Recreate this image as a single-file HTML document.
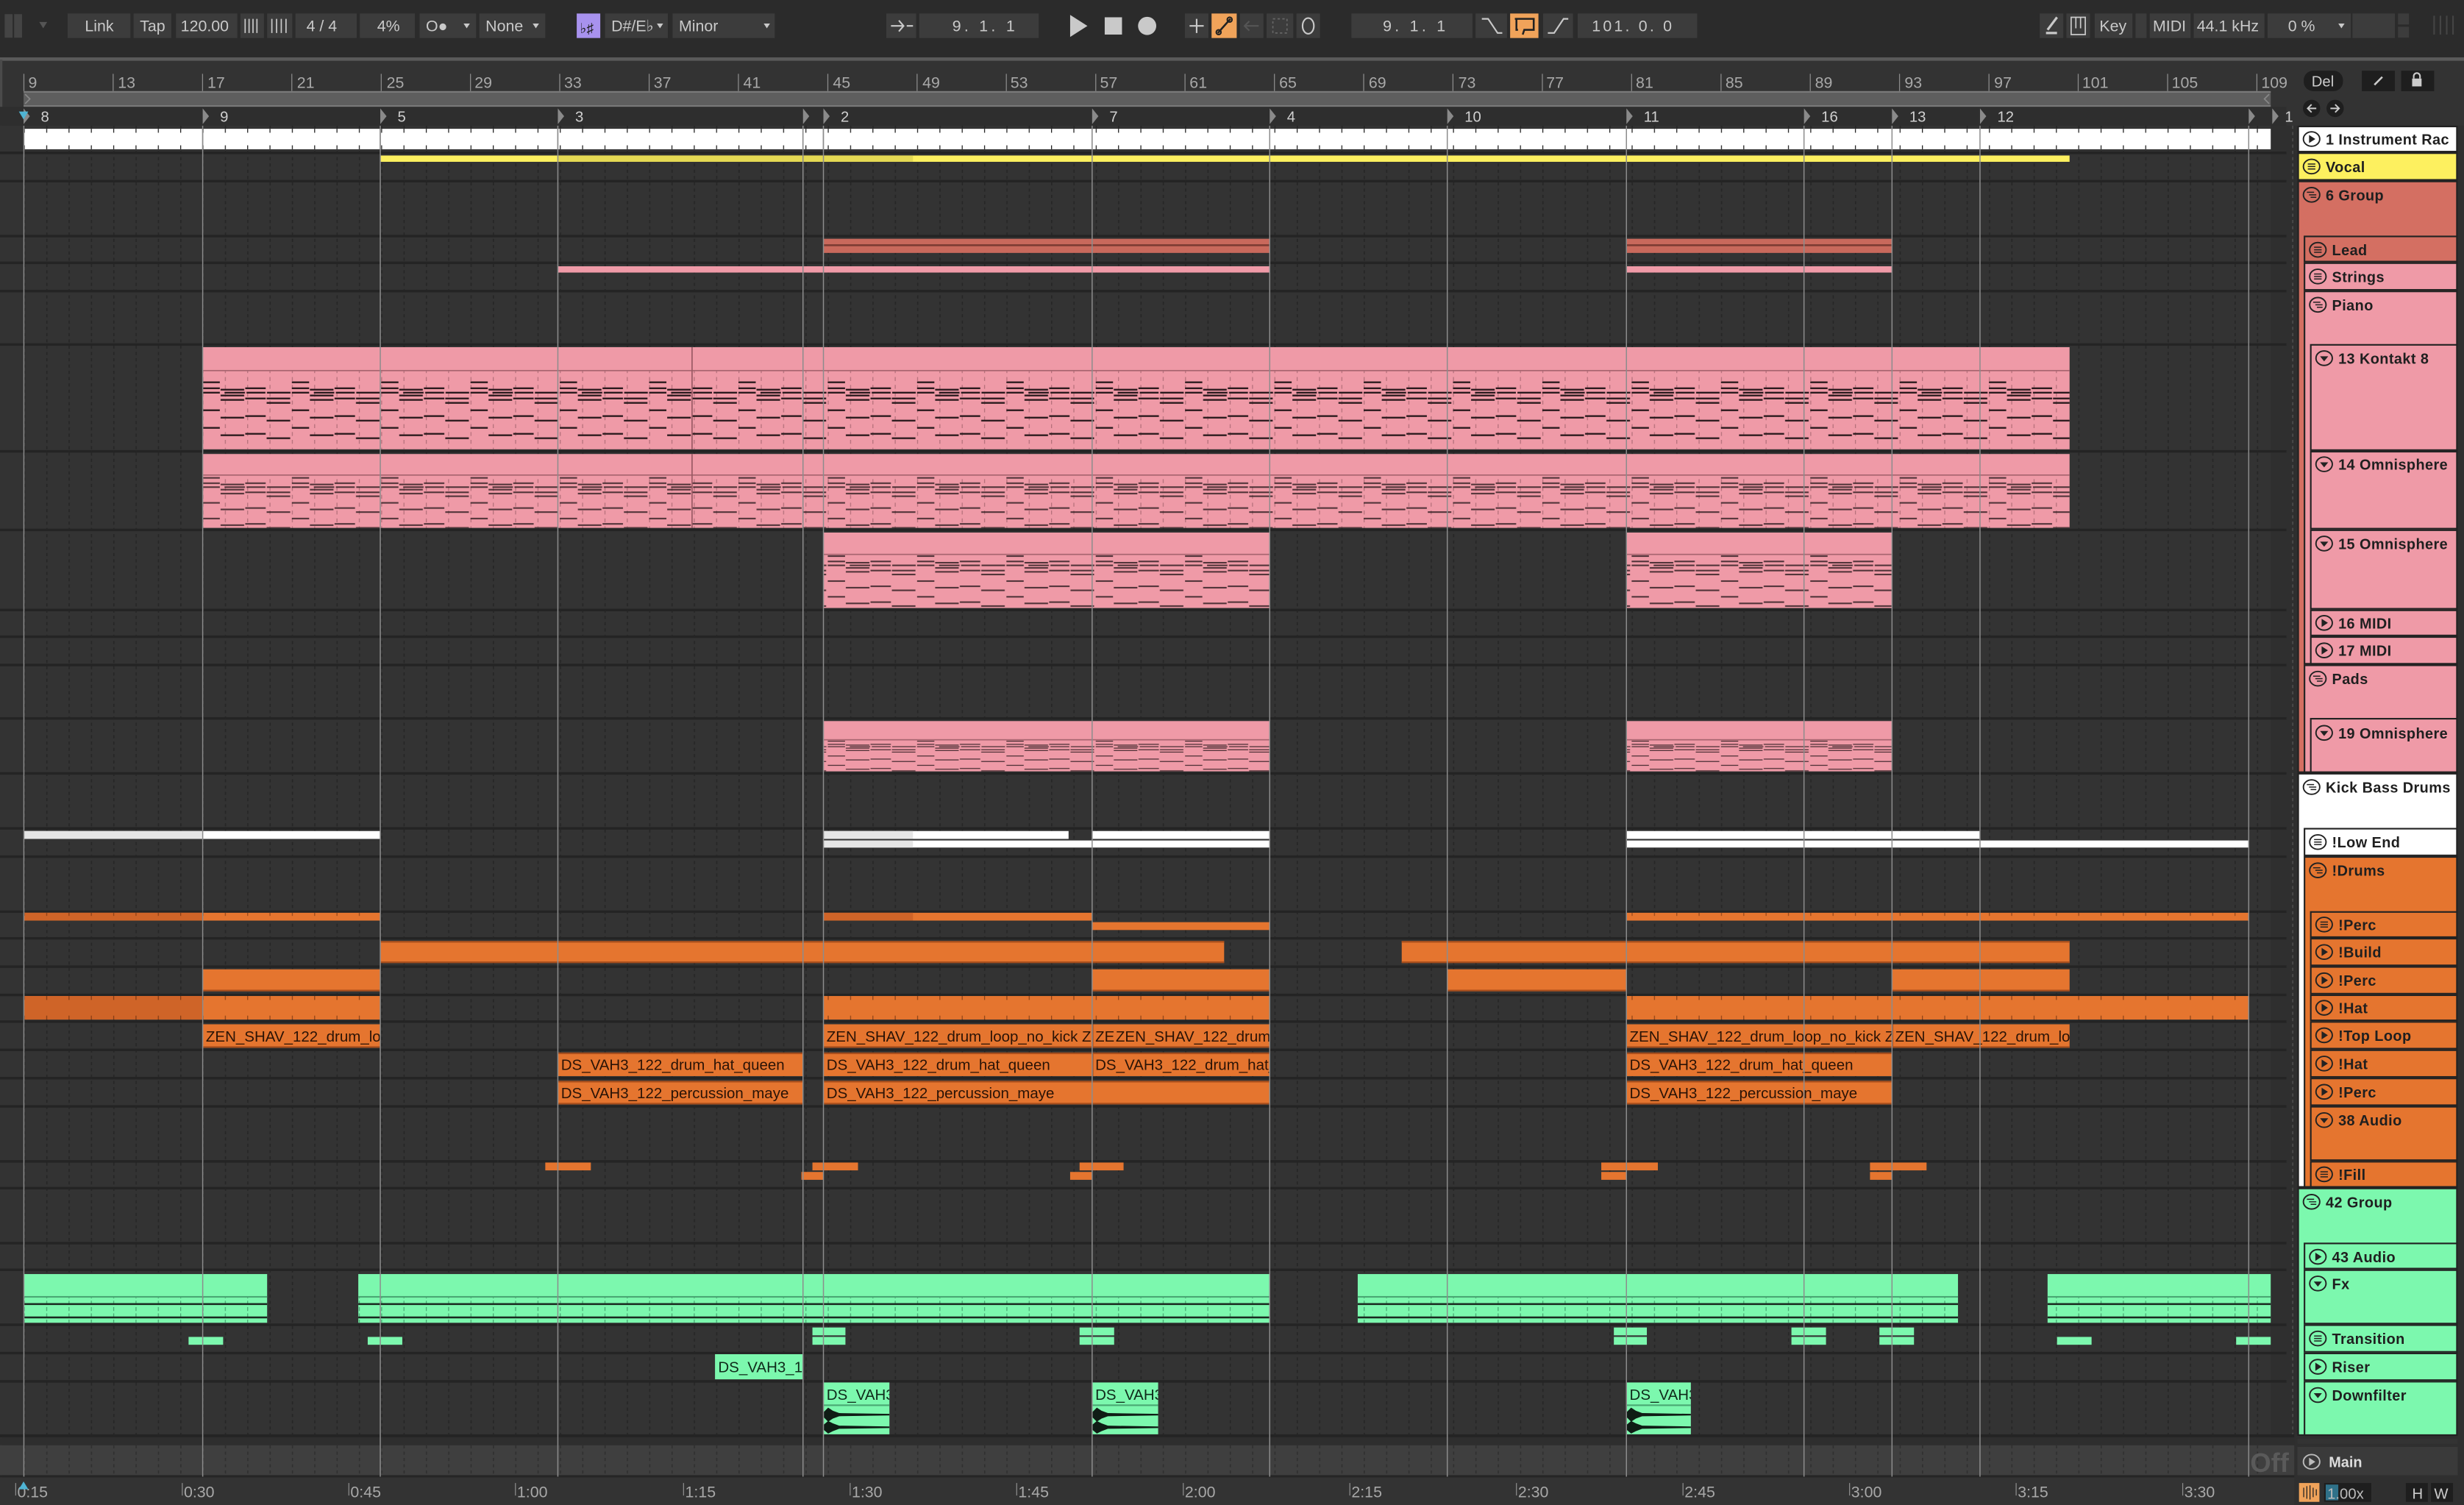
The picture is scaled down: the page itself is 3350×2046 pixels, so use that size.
<!DOCTYPE html>
<html><head><meta charset="utf-8"><style>
html,body{margin:0;padding:0;background:#2b2b2b;width:3350px;height:2046px;overflow:hidden}
svg{display:block}
text{font-family:"Liberation Sans",sans-serif}
.tb{font-size:10px;fill:#c9c9c9}
.hd{font-size:9.3px;font-weight:bold;fill:#1f1f1f;letter-spacing:0.2px}
.rl{font-size:10px;fill:#a8a8a8;font-family:"Liberation Sans Narrow","Liberation Sans",sans-serif}
.cl{font-size:9.6px;fill:#2a1306;font-family:"Liberation Sans Narrow","Liberation Sans",sans-serif}
.gl{font-size:9.6px;fill:#0f2a1a;font-family:"Liberation Sans Narrow","Liberation Sans",sans-serif}
</style></head><body>
<svg width="3350" height="2046" viewBox="0 0 1568 958" preserveAspectRatio="none" xmlns="http://www.w3.org/2000/svg">
<defs>
<pattern id="grid" patternUnits="userSpaceOnUse" x="15.2" y="0" width="14.21" height="4"><rect x="0" y="0" width="0.8" height="2" fill="#262626"/></pattern>
<pattern id="wt" patternUnits="userSpaceOnUse" x="15.2" y="82" width="14.21" height="13"><rect x="0" y="0" width="0.6" height="2.5" fill="#222"/><rect x="0" y="10.5" width="0.6" height="2.5" fill="#222"/></pattern>
<pattern id="ot" patternUnits="userSpaceOnUse" x="15.2" y="634" width="14.21" height="15"><rect x="0" y="0" width="0.6" height="2.5" fill="rgba(60,20,0,0.5)"/><rect x="0" y="12.5" width="0.6" height="2.5" fill="rgba(60,20,0,0.5)"/></pattern>
<pattern id="ot2" patternUnits="userSpaceOnUse" x="15.2" y="581" width="14.21" height="5"><rect x="0" y="0" width="0.6" height="2" fill="rgba(60,20,0,0.45)"/></pattern>
<pattern id="pt" patternUnits="userSpaceOnUse" x="15.2" y="0" width="14.21" height="5"><rect x="0" y="0" width="0.6" height="2.5" fill="#b5707b"/></pattern>
<pattern id="gt" patternUnits="userSpaceOnUse" x="15.2" y="0" width="14.21" height="4"><rect x="0" y="0" width="0.6" height="2.5" fill="#4aa874"/></pattern>
<pattern id="nt" patternUnits="userSpaceOnUse" width="56.84" height="60" patternTransform="translate(15.2,242.8)">
<g fill="#2a1a1d">
<rect x="0" y="0" width="11" height="1.1"/><rect x="0" y="3.8" width="11" height="1.1"/><rect x="11.5" y="4.7" width="15" height="1.1"/><rect x="27.2" y="3.8" width="13" height="1.1"/>
<rect x="0" y="6.6" width="11" height="1.1"/><rect x="14" y="6.6" width="13" height="1.1"/><rect x="28" y="6.6" width="12" height="1.1"/><rect x="41" y="6.6" width="15" height="1.1"/>
<rect x="11.5" y="8.4" width="15" height="1.1"/><rect x="27.2" y="10.3" width="13" height="1.1"/><rect x="40.8" y="10.3" width="15" height="1.1"/><rect x="11.5" y="11.2" width="15" height="1.1"/><rect x="40.8" y="13.1" width="15" height="1.1"/>
<rect x="0" y="17.8" width="11" height="1.1"/><rect x="11.5" y="22.5" width="15" height="1.1"/><rect x="27.2" y="21.5" width="13" height="1.1"/><rect x="40.8" y="24.4" width="15" height="1.1"/>
<rect x="0" y="29" width="11" height="1.1"/><rect x="11.5" y="33.7" width="15" height="1.1"/><rect x="27.2" y="32.8" width="13" height="1.1"/><rect x="40.8" y="35.6" width="15" height="1.1"/>
</g></pattern>
<pattern id="nt2" href="#nt" patternTransform="translate(15.2,303.7) scale(1,0.893)"/>
<pattern id="nt3" href="#nt" patternTransform="translate(15.2,353.5) scale(1,0.893)"/>
<pattern id="nt4" href="#nt" patternTransform="translate(15.2,471.5) scale(1,0.53)"/>
<g id="ic-play"><ellipse cx="0" cy="0" rx="5.2" ry="4.6" fill="none" stroke="#222" stroke-width="0.9"/><path d="M-1.6,-2.6 L2.4,0 L-1.6,2.6Z" fill="#222"/></g>
<g id="ic-down"><ellipse cx="0" cy="0" rx="5.2" ry="4.6" fill="none" stroke="#222" stroke-width="0.9"/><path d="M-2.6,-1.2 L2.6,-1.2 L0,2Z" fill="#222"/></g>
<g id="ic-lines"><ellipse cx="0" cy="0" rx="5.2" ry="4.6" fill="none" stroke="#222" stroke-width="0.9"/><path d="M-2.4,-1.6H2.4M-2.4,0H2.4M-2.4,1.6H2.4" stroke="#222" stroke-width="0.7"/></g>
<g id="ic-grp"><ellipse cx="0" cy="0" rx="5.2" ry="4.6" fill="none" stroke="#222" stroke-width="0.9"/><path d="M-3,-1.6H1.6M-1.6,0H3M-0.6,1.6H3" stroke="#222" stroke-width="0.7"/></g>
</defs>

<!-- top bar -->
<rect x="0" y="0" width="1568" height="37" fill="#2b2b2b"/>
<g fill="#3c3c3c">
<rect x="3" y="9" width="5" height="15" fill="#444"/><rect x="9" y="9" width="5" height="15" fill="#444"/>
<rect x="43" y="8.6" width="40" height="15.6"/><rect x="85" y="8.6" width="24" height="15.6"/><rect x="112" y="8.6" width="39" height="15.6"/>
<rect x="153" y="8.6" width="15" height="15.6"/><rect x="170" y="8.6" width="16" height="15.6"/><rect x="188" y="8.6" width="39" height="15.6"/>
<rect x="229" y="8.6" width="35" height="15.6"/><rect x="267" y="8.6" width="36" height="15.6"/><rect x="305" y="8.6" width="42" height="15.6"/>
<rect x="367" y="8.6" width="15" height="15.6" fill="#a892ee"/><rect x="385" y="8.6" width="40" height="15.6"/><rect x="428" y="8.6" width="65" height="15.6"/>
<rect x="564" y="8.6" width="19" height="15.6"/><rect x="585" y="8.6" width="76" height="15.6"/>
<rect x="754" y="8.6" width="15" height="15.6"/><rect x="771" y="8.6" width="16" height="15.6" fill="#f0a35a"/>
<rect x="789" y="8.6" width="15" height="15.6"/><rect x="806" y="8.6" width="17" height="15.6"/><rect x="825" y="8.6" width="15" height="15.6"/>
<rect x="860" y="8.6" width="77" height="15.6"/><rect x="939" y="8.6" width="20" height="15.6"/><rect x="961" y="8.6" width="18" height="15.6" fill="#f0a35a"/>
<rect x="982" y="8.6" width="19" height="15.6"/><rect x="1004" y="8.6" width="76" height="15.6"/>
<rect x="1298" y="8.6" width="15" height="15.6"/><rect x="1315" y="8.6" width="15" height="15.6"/><rect x="1333" y="8.6" width="24" height="15.6"/><rect x="1359" y="8.6" width="7" height="15.6"/>
<rect x="1368" y="8.6" width="26" height="15.6"/><rect x="1396" y="8.6" width="45" height="15.6"/><rect x="1443" y="8.6" width="53" height="15.6"/>
<rect x="1497" y="8.6" width="27" height="15.6"/><rect x="1526" y="8.6" width="7" height="7"/><rect x="1526" y="17" width="7" height="7"/>
</g>
<path d="M25,14 L30,14 L27.5,18Z" fill="#555"/>
<path d="M1549,10V22M1553,10V22M1557,10V22M1561,10V22" stroke="#444" stroke-width="1"/>
<text class="tb" x="54" y="20">Link</text><text class="tb" x="89" y="20">Tap</text><text class="tb" x="115" y="20">120.00</text>
<path d="M156,12V21M158.5,12V21M161,12V21M163.5,12V21M173,12V21M176,12V21M179,12V21M182,12V21" stroke="#c9c9c9" stroke-width="0.8"/>
<text class="tb" x="195" y="20">4 / 4</text><text class="tb" x="240" y="20">4%</text>
<text class="tb" x="271" y="20">O●</text><path d="M295,15 L299,15 L297,18Z" fill="#c9c9c9"/>
<text class="tb" x="309" y="20">None</text><path d="M339,15 L343,15 L341,18Z" fill="#c9c9c9"/>
<text x="369" y="21" style="font-size:9px;fill:#1e1e1e">♭♯</text>
<text class="tb" x="389" y="20">D#/E♭</text><path d="M418,15 L422,15 L420,18Z" fill="#c9c9c9"/>
<text class="tb" x="432" y="20">Minor</text><path d="M486,15 L490,15 L488,18Z" fill="#c9c9c9"/>
<path d="M567,16.5H575M572,13L575,16.5L572,20M577,16.5H581" stroke="#c9c9c9" stroke-width="1" fill="none"/>
<text class="tb" x="606" y="20" style="letter-spacing:2px">9. 1. 1</text>
<path d="M681,9.5 L692,16.5 L681,23.5Z" fill="#c9c9c9"/><rect x="703" y="11" width="11" height="11" fill="#c9c9c9"/><circle cx="730" cy="16.5" r="5.8" fill="#c9c9c9"/>
<path d="M757,16.5H766M761.5,12V21" stroke="#c9c9c9" stroke-width="1"/>
<path d="M775,21 L783,12" stroke="#222" stroke-width="1.2"/><circle cx="775.5" cy="20.5" r="1.5" fill="none" stroke="#222"/><circle cx="782.5" cy="12.5" r="1.5" fill="none" stroke="#222"/>
<path d="M792,16.5H801M795,13.5L792,16.5L795,19.5" stroke="#555" stroke-width="1" fill="none"/>
<rect x="810" y="12" width="9" height="9" fill="none" stroke="#666" stroke-width="0.8" stroke-dasharray="1.5,1.5"/>
<ellipse cx="832.5" cy="16.5" rx="3.6" ry="5" fill="none" stroke="#c9c9c9" stroke-width="1"/>
<text class="tb" x="880" y="20" style="letter-spacing:2px">9. 1. 1</text>
<path d="M943,12H947L953,21H956" stroke="#c9c9c9" stroke-width="1" fill="none"/>
<path d="M964,12H976V19H970L969,22M966,19H965V12" stroke="#222" stroke-width="1.2" fill="none"/>
<path d="M985,21H989L995,12H998" stroke="#c9c9c9" stroke-width="1" fill="none"/>
<text class="tb" x="1013" y="20" style="letter-spacing:1.5px">101. 0. 0</text>
<path d="M1302,21H1309M1303,19L1309,11" stroke="#c9c9c9" stroke-width="1.5"/>
<path d="M1318,11H1327V22H1318ZM1321,11V18M1324,11V18" stroke="#c9c9c9" stroke-width="0.8" fill="none"/>
<text class="tb" x="1336" y="20">Key</text><text class="tb" x="1370" y="20">MIDI</text><text class="tb" x="1398" y="20">44.1 kHz</text>
<text class="tb" x="1456" y="20">0 %</text><path d="M1488,15 L1492,15 L1490,18Z" fill="#c9c9c9"/>

<!-- panel -->
<rect x="0" y="36.5" width="1568" height="921.5" fill="#333"/>
<rect x="0" y="36.5" width="1568" height="2.2" fill="#5a5a5a"/>
<rect x="0" y="38" width="1.5" height="920" fill="#4a4a4a"/>
<!-- ruler -->
<g stroke="#8a8a8a" stroke-width="0.6">
<path d="M15.2,47V58M72,47V58M128.9,47V58M185.7,47V58M242.6,47V58M299.4,47V58M356.2,47V58M413.1,47V58M469.9,47V58M526.8,47V58M583.6,47V58M640.4,47V58M697.3,47V58M754.1,47V58M811,47V58M867.8,47V58M924.6,47V58M981.5,47V58M1038.3,47V58M1095.2,47V58M1152,47V58M1208.8,47V58M1265.7,47V58M1322.5,47V58M1379.4,47V58M1436.2,47V58"/>
</g>
<g class="rl">
<text class="rl" x="18" y="56">9</text><text class="rl" x="75" y="56">13</text><text class="rl" x="132" y="56">17</text><text class="rl" x="189" y="56">21</text><text class="rl" x="246" y="56">25</text><text class="rl" x="302" y="56">29</text><text class="rl" x="359" y="56">33</text><text class="rl" x="416" y="56">37</text><text class="rl" x="473" y="56">41</text><text class="rl" x="530" y="56">45</text><text class="rl" x="587" y="56">49</text><text class="rl" x="643" y="56">53</text><text class="rl" x="700" y="56">57</text><text class="rl" x="757" y="56">61</text><text class="rl" x="814" y="56">65</text><text class="rl" x="871" y="56">69</text><text class="rl" x="928" y="56">73</text><text class="rl" x="984" y="56">77</text><text class="rl" x="1041" y="56">81</text><text class="rl" x="1098" y="56">85</text><text class="rl" x="1155" y="56">89</text><text class="rl" x="1212" y="56">93</text><text class="rl" x="1269" y="56">97</text><text class="rl" x="1325" y="56">101</text><text class="rl" x="1382" y="56">105</text><text class="rl" x="1439" y="56">109</text>
</g>
<!-- loop bar -->
<rect x="15" y="58" width="1430" height="10" fill="#5e5e5e"/>
<rect x="15" y="58" width="1430" height="1" fill="#7a7a7a"/><rect x="15" y="67" width="1430" height="1" fill="#7a7a7a"/>
<path d="M16,60 L19,63 L16,66" stroke="#888" fill="none" stroke-width="0.8"/><path d="M1444,60 L1441,63 L1444,66" stroke="#888" fill="none" stroke-width="0.8"/>
<!-- right controls -->
<rect x="1466" y="45" width="25" height="13" rx="6" fill="#1e1e1e"/><text x="1471" y="55" style="font-size:9.5px;fill:#ccc">Del</text>
<rect x="1503" y="45" width="21" height="13" fill="#1e1e1e"/><path d="M1511,54L1516,49" stroke="#ccc" stroke-width="1.2"/>
<rect x="1528" y="45" width="21" height="13" fill="#1e1e1e"/><rect x="1535" y="50" width="6" height="5" fill="#ccc"/><path d="M1536,50V48.5A2,2 0 0 1 1540,48.5V50" stroke="#ccc" fill="none"/>
<circle cx="1471" cy="69" r="5.5" fill="#1e1e1e"/><path d="M1468.5,69H1474M1471,66.5L1468.5,69L1471,71.5" stroke="#ccc" fill="none" stroke-width="0.9"/>
<circle cx="1486" cy="69" r="5.5" fill="#1e1e1e"/><path d="M1483,69H1488.5M1486,66.5L1488.5,69L1486,71.5" stroke="#ccc" fill="none" stroke-width="0.9"/>
<!-- locator row -->
<rect x="0" y="68" width="1455" height="12" fill="#2e2e2e"/>
<g fill="#8a8a8a">
<path d="M15,69l4,5l-4,5z"/><path d="M129,69l4,5l-4,5z"/><path d="M242,69l4,5l-4,5z"/><path d="M355,69l4,5l-4,5z"/><path d="M511,69l4,5l-4,5z"/><path d="M524,69l4,5l-4,5z"/><path d="M695,69l4,5l-4,5z"/><path d="M808,69l4,5l-4,5z"/><path d="M921,69l4,5l-4,5z"/><path d="M1035,69l4,5l-4,5z"/><path d="M1148,69l4,5l-4,5z"/><path d="M1204,69l4,5l-4,5z"/><path d="M1260,69l4,5l-4,5z"/><path d="M1431,69l4,5l-4,5z"/><path d="M1446,69l4,5l-4,5z"/>
</g>
<g style="font-size:9.5px;fill:#d0d0d0">
<text x="26" y="77.5">8</text><text x="140" y="77.5">9</text><text x="253" y="77.5">5</text><text x="366" y="77.5">3</text><text x="535" y="77.5">2</text><text x="706" y="77.5">7</text><text x="819" y="77.5">4</text><text x="932" y="77.5">10</text><text x="1046" y="77.5">11</text><text x="1159" y="77.5">16</text><text x="1215" y="77.5">13</text><text x="1271" y="77.5">12</text><text x="1454" y="77.5">1</text>
</g>
<path d="M12,71 L15,76 L18,71Z" fill="#4fb4d4"/>

<!-- lanes bg + grid -->
<rect x="0" y="80" width="1455" height="834" fill="#333"/>
<rect x="15" y="80" width="1430" height="834" fill="url(#grid)"/>
<rect x="1445" y="80" width="17" height="860" fill="#2f2f2f"/>
<path d="M1459,80V940" stroke="#555" stroke-width="0.6" stroke-dasharray="2,2"/>
<g fill="#242424">
<rect x="0" y="96.5" width="1455" height="1.6"/><rect x="0" y="114.5" width="1455" height="1.6"/><rect x="0" y="149.5" width="1455" height="1.6"/><rect x="0" y="166.5" width="1455" height="1.6"/><rect x="0" y="184.5" width="1455" height="1.6"/><rect x="0" y="218.5" width="1455" height="1.6"/><rect x="0" y="286.5" width="1455" height="1.6"/><rect x="0" y="336.5" width="1455" height="1.6"/><rect x="0" y="387.5" width="1455" height="1.6"/><rect x="0" y="404.5" width="1455" height="1.6"/><rect x="0" y="422.5" width="1455" height="1.6"/><rect x="0" y="456.5" width="1455" height="1.6"/><rect x="0" y="491.5" width="1455" height="1.6"/><rect x="0" y="526.5" width="1455" height="1.6"/><rect x="0" y="544.5" width="1455" height="1.6"/><rect x="0" y="579.5" width="1455" height="1.6"/><rect x="0" y="596.5" width="1455" height="1.6"/><rect x="0" y="614.5" width="1455" height="1.6"/><rect x="0" y="632.5" width="1455" height="1.6"/><rect x="0" y="649.5" width="1455" height="1.6"/><rect x="0" y="667.5" width="1455" height="1.6"/><rect x="0" y="685.5" width="1455" height="1.6"/><rect x="0" y="703.5" width="1455" height="1.6"/><rect x="0" y="738.5" width="1455" height="1.6"/><rect x="0" y="755.5" width="1455" height="1.6"/><rect x="0" y="790.5" width="1455" height="1.6"/><rect x="0" y="807.5" width="1455" height="1.6"/><rect x="0" y="842.5" width="1455" height="1.6"/><rect x="0" y="860.5" width="1455" height="1.6"/><rect x="0" y="878.5" width="1455" height="1.6"/><rect x="0" y="913" width="1568" height="2"/>
</g>
<rect x="0" y="915" width="1462" height="5" fill="#2e2e2e"/>
<rect x="0" y="920" width="1462" height="19" fill="#3f3f3f"/>
<rect x="15" y="920" width="1430" height="19" fill="url(#grid)" opacity="0.6"/>
<rect x="0" y="939" width="1568" height="1.5" fill="#262626"/>

<!-- clips: instrument rack white -->
<rect x="15" y="82" width="1430" height="13" fill="#fff"/>
<rect x="15" y="82" width="1430" height="13" fill="url(#wt)"/>
<g fill="#888"><rect x="128.6" y="82" width="0.7" height="13"/><rect x="241.6" y="82" width="0.7" height="13"/><rect x="354.6" y="82" width="0.7" height="13"/><rect x="510.6" y="82" width="0.7" height="13"/><rect x="523.6" y="82" width="0.7" height="13"/><rect x="694.6" y="82" width="0.7" height="13"/></g>
<!-- vocal yellow -->
<rect x="242" y="99" width="1075" height="4" fill="#fdf05f"/>
<rect x="355" y="99" width="226" height="4" fill="#e4d953"/>
<!-- lead / strings -->
<rect x="524" y="152" width="284" height="9" fill="#c9695c"/><rect x="524" y="155.5" width="284" height="1.2" fill="#7c3b33"/>
<rect x="1035" y="152" width="169" height="9" fill="#c9695c"/><rect x="1035" y="155.5" width="169" height="1.2" fill="#7c3b33"/>
<rect x="355" y="169.5" width="453" height="4" fill="#ef9aa7"/><rect x="1035" y="169.5" width="169" height="4" fill="#ef9aa7"/>

<!-- pink midi clips -->
<g>
<rect x="129" y="221" width="1188" height="65" fill="#ef9aa7"/>
<rect x="129" y="236" width="1188" height="50" fill="url(#pt)"/>
<rect x="129" y="235.5" width="1188" height="0.8" fill="#a86570"/>
<rect x="129" y="236" width="1188" height="50" fill="url(#nt)"/>
<rect x="129" y="289" width="1188" height="47" fill="#ef9aa7"/>
<rect x="129" y="302" width="1188" height="34" fill="url(#pt)"/>
<rect x="129" y="302" width="1188" height="0.8" fill="#a86570"/>
<rect x="129" y="302" width="1188" height="34" fill="url(#nt2)" opacity="0.8"/>
<rect x="524" y="339" width="284" height="48" fill="#ef9aa7"/><rect x="1035" y="339" width="169" height="48" fill="#ef9aa7"/>
<rect x="524" y="352.5" width="284" height="0.8" fill="#a86570"/><rect x="1035" y="352.5" width="169" height="0.8" fill="#a86570"/>
<rect x="524" y="353" width="284" height="34" fill="url(#nt3)" opacity="0.8"/><rect x="1035" y="353" width="169" height="34" fill="url(#nt3)" opacity="0.8"/>
<rect x="524" y="459" width="284" height="32" fill="#ef9aa7"/><rect x="1035" y="459" width="169" height="32" fill="#ef9aa7"/>
<rect x="524" y="470.5" width="284" height="0.8" fill="#a86570"/><rect x="1035" y="470.5" width="169" height="0.8" fill="#a86570"/>
<rect x="524" y="471" width="284" height="20" fill="url(#nt4)" opacity="0.85"/><rect x="1035" y="471" width="169" height="20" fill="url(#nt4)" opacity="0.85"/>
<g fill="#9a5a64"><rect x="440" y="221" width="0.8" height="65"/><rect x="440" y="289" width="0.8" height="47"/></g>
</g>

<!-- low end white -->
<rect x="15" y="529" width="227" height="5" fill="#fff"/><rect x="15" y="529" width="114" height="5" fill="#e6e6e6"/>
<rect x="524" y="529" width="156" height="5" fill="#fff"/><rect x="524" y="529" width="57" height="5" fill="#e6e6e6"/><rect x="695" y="529" width="113" height="5" fill="#fff"/>
<rect x="524" y="535" width="284" height="4.5" fill="#fff"/><rect x="524" y="535" width="57" height="4.5" fill="#e6e6e6"/>
<rect x="1035" y="529" width="225" height="5" fill="#fff"/><rect x="1035" y="535" width="396" height="4.5" fill="#fff"/>

<!-- orange -->
<g fill="#e5752f">
<rect x="15" y="581" width="227" height="5"/><rect x="524" y="581" width="171" height="5"/><rect x="1035" y="581" width="396" height="5"/><rect x="695" y="587" width="113" height="5"/>
<rect x="242" y="599" width="537" height="14"/><rect x="892" y="599" width="425" height="14"/>
<rect x="129" y="617" width="113" height="14"/><rect x="695" y="617" width="113" height="14"/><rect x="921" y="617" width="114" height="14"/><rect x="1204" y="617" width="113" height="14"/>
<rect x="15" y="634" width="227" height="15"/><rect x="524" y="634" width="284" height="15"/><rect x="1035" y="634" width="396" height="15"/>
<rect x="129" y="652" width="113" height="15"/><rect x="524" y="652" width="284" height="15"/><rect x="1035" y="652" width="282" height="15"/>
<rect x="355" y="670" width="156" height="15"/><rect x="524" y="670" width="284" height="15"/><rect x="1035" y="670" width="169" height="15"/>
<rect x="355" y="688" width="156" height="15"/><rect x="524" y="688" width="284" height="15"/><rect x="1035" y="688" width="169" height="15"/>
<rect x="347" y="740" width="29" height="5"/><rect x="517" y="740" width="29" height="5"/><rect x="687" y="740" width="28" height="5"/><rect x="1019" y="740" width="36" height="5"/><rect x="1190" y="740" width="36" height="5"/>
<rect x="510" y="746" width="14" height="5"/><rect x="681" y="746" width="14" height="5"/><rect x="1019" y="746" width="16" height="5"/><rect x="1190" y="746" width="14" height="5"/>
</g>
<g fill="#cf6428"><rect x="15" y="581" width="114" height="5"/><rect x="524" y="581" width="57" height="5"/><rect x="15" y="634" width="114" height="15"/></g>
<g fill="#a84e1c"><rect x="242" y="599" width="537" height="1"/><rect x="892" y="599" width="425" height="1"/><rect x="242" y="612" width="537" height="1"/><rect x="892" y="612" width="425" height="1"/>
<rect x="129" y="630" width="113" height="1"/><rect x="695" y="630" width="113" height="1"/><rect x="921" y="630" width="114" height="1"/><rect x="1204" y="630" width="113" height="1"/>
<rect x="129" y="666" width="113" height="1"/><rect x="524" y="666" width="284" height="1"/><rect x="1035" y="666" width="282" height="1"/>
<rect x="355" y="670" width="156" height="1"/><rect x="524" y="670" width="284" height="1"/><rect x="1035" y="670" width="169" height="1"/>
<rect x="355" y="688" width="156" height="1"/><rect x="524" y="688" width="284" height="1"/><rect x="1035" y="688" width="169" height="1"/>
<rect x="355" y="702" width="156" height="1"/><rect x="524" y="702" width="284" height="1"/><rect x="1035" y="702" width="169" height="1"/></g>
<g>
<rect x="15" y="634" width="227" height="15" fill="url(#ot)"/><rect x="524" y="634" width="284" height="15" fill="url(#ot)"/><rect x="1035" y="634" width="396" height="15" fill="url(#ot)"/>
<rect x="15" y="581" width="227" height="5" fill="url(#ot2)"/><rect x="1035" y="581" width="396" height="5" fill="url(#ot2)"/>
</g>
<g class="cl">
<svg x="129" y="652" width="113" height="15"><text class="cl" x="2" y="11">ZEN_SHAV_122_drum_loop_no_kick</text></svg>
<svg x="524" y="652" width="171" height="15"><text class="cl" x="2" y="11">ZEN_SHAV_122_drum_loop_no_kick ZE</text></svg>
<svg x="695" y="652" width="113" height="15"><text class="cl" x="2" y="11">ZE</text><text class="cl" x="15" y="11">ZEN_SHAV_122_drum_loop</text></svg>
<svg x="1035" y="652" width="169" height="15"><text class="cl" x="2" y="11">ZEN_SHAV_122_drum_loop_no_kick ZE</text></svg>
<svg x="1204" y="652" width="113" height="15"><text class="cl" x="2" y="11">ZEN_SHAV_122_drum_loop</text></svg>
<svg x="355" y="670" width="156" height="15"><text class="cl" x="2" y="11">DS_VAH3_122_drum_hat_queen</text></svg>
<svg x="524" y="670" width="171" height="15"><text class="cl" x="2" y="11">DS_VAH3_122_drum_hat_queen</text></svg>
<svg x="695" y="670" width="113" height="15"><text class="cl" x="2" y="11">DS_VAH3_122_drum_hat_queen</text></svg>
<svg x="1035" y="670" width="169" height="15"><text class="cl" x="2" y="11">DS_VAH3_122_drum_hat_queen</text></svg>
<svg x="355" y="688" width="156" height="15"><text class="cl" x="2" y="11">DS_VAH3_122_percussion_maye</text></svg>
<svg x="524" y="688" width="284" height="15"><text class="cl" x="2" y="11">DS_VAH3_122_percussion_maye</text></svg>
<svg x="1035" y="688" width="169" height="15"><text class="cl" x="2" y="11">DS_VAH3_122_percussion_maye</text></svg>
</g>
<g fill="#a84e1c"><rect x="695" y="652" width="0.8" height="15"/><rect x="1204" y="652" width="0.8" height="15"/><rect x="695" y="670" width="0.8" height="15"/></g>

<!-- green -->
<g fill="#7cf8ae">
<rect x="15" y="811" width="155" height="31"/><rect x="228" y="811" width="580" height="31"/><rect x="864" y="811" width="382" height="31"/><rect x="1303" y="811" width="142" height="31"/>
<rect x="120" y="851" width="22" height="5"/><rect x="234" y="851" width="22" height="5"/>
<rect x="517" y="845" width="21" height="5"/><rect x="517" y="851" width="21" height="5"/><rect x="687" y="845" width="22" height="5"/><rect x="687" y="851" width="22" height="5"/>
<rect x="1027" y="845" width="21" height="5"/><rect x="1027" y="851" width="21" height="5"/><rect x="1140" y="845" width="22" height="5"/><rect x="1140" y="851" width="22" height="5"/>
<rect x="1196" y="845" width="22" height="5"/><rect x="1196" y="851" width="22" height="5"/><rect x="1309" y="851" width="22" height="5"/><rect x="1423" y="851" width="22" height="5"/>
<rect x="455" y="862" width="56" height="16"/>
<rect x="524" y="880" width="42" height="33"/><rect x="695" y="880" width="42" height="33"/><rect x="1035" y="880" width="41" height="33"/>
</g>
<g fill="#4aa874"><rect x="15" y="825" width="155" height="1"/><rect x="228" y="825" width="580" height="1"/><rect x="864" y="825" width="382" height="1"/><rect x="1303" y="825" width="142" height="1"/>
<rect x="524" y="894" width="42" height="1"/><rect x="695" y="894" width="42" height="1"/><rect x="1035" y="894" width="41" height="1"/></g>
<g fill="url(#gt)"><rect x="15" y="826" width="155" height="16"/><rect x="228" y="826" width="580" height="16"/><rect x="864" y="826" width="382" height="16"/><rect x="1303" y="826" width="142" height="16"/></g>
<g fill="#1a2a20"><rect x="15" y="829.5" width="155" height="1.2"/><rect x="228" y="829.5" width="580" height="1.2"/><rect x="864" y="829.5" width="382" height="1.2"/><rect x="1303" y="829.5" width="142" height="1.2"/>
<rect x="15" y="838" width="155" height="1.2"/><rect x="228" y="838" width="580" height="1.2"/><rect x="864" y="838" width="382" height="1.2"/><rect x="1303" y="838" width="142" height="1.2"/></g>
<g fill="#0f1c15">
<path d="M524,899 L527,896 L530,898 L534,899.5 L566,900 L566,901 L534,901.5 L530,903 L527,905 L524,902Z"/><path d="M524,907 L527,904.5 L530,906 L534,907.5 L566,908 L566,909 L534,909.5 L530,911 L527,912.5 L524,910Z"/>
<path d="M695,899 L698,896 L701,898 L705,899.5 L737,900 L737,901 L705,901.5 L701,903 L698,905 L695,902Z"/><path d="M695,907 L698,904.5 L701,906 L705,907.5 L737,908 L737,909 L705,909.5 L701,911 L698,912.5 L695,910Z"/>
<path d="M1035,899 L1038,896 L1041,898 L1045,899.5 L1076,900 L1076,901 L1045,901.5 L1041,903 L1038,905 L1035,902Z"/><path d="M1035,907 L1038,904.5 L1041,906 L1045,907.5 L1076,908 L1076,909 L1045,909.5 L1041,911 L1038,912.5 L1035,910Z"/>
</g>
<svg x="455" y="862" width="56" height="16"><text class="gl" x="2" y="11.5">DS_VAH3_122</text></svg>
<svg x="524" y="880" width="42" height="14"><text class="gl" x="2" y="11">DS_VAH3</text></svg>
<svg x="695" y="880" width="42" height="14"><text class="gl" x="2" y="11">DS_VAH3</text></svg>
<svg x="1035" y="880" width="41" height="14"><text class="gl" x="2" y="11">DS_VAH3</text></svg>

<!-- locator vertical lines -->
<g stroke="#8c8c8c" stroke-width="0.7">
<path d="M15.2,80V940M129,80V940M242,80V940M355,80V940M511,80V940M524,80V940M695,80V940M808,80V940M921,80V940M1035,80V940M1148,80V940M1204,80V940M1260,80V940M1431,80V940"/>
</g>
<text x="1432" y="937" style="font-size:17px;font-weight:bold;fill:#5a5a5a;font-family:'Liberation Sans Narrow','Liberation Sans',sans-serif">Off</text>

<!-- bottom time ruler -->
<rect x="0" y="940.5" width="1568" height="17.5" fill="#333"/>
<g stroke="#8a8a8a" stroke-width="0.6"><path d="M10,944V952M116,944V952M222,944V952M328,944V952M435,944V952M541,944V952M647,944V952M753,944V952M859,944V952M965,944V952M1071,944V952M1177,944V952M1283,944V952M1389,944V952"/></g>
<g class="rl">
<text class="rl" x="11" y="953">0:15</text><text class="rl" x="117" y="953">0:30</text><text class="rl" x="223" y="953">0:45</text><text class="rl" x="329" y="953">1:00</text><text class="rl" x="436" y="953">1:15</text><text class="rl" x="542" y="953">1:30</text><text class="rl" x="648" y="953">1:45</text><text class="rl" x="754" y="953">2:00</text><text class="rl" x="860" y="953">2:15</text><text class="rl" x="966" y="953">2:30</text><text class="rl" x="1072" y="953">2:45</text><text class="rl" x="1178" y="953">3:00</text><text class="rl" x="1284" y="953">3:15</text><text class="rl" x="1390" y="953">3:30</text>
</g>
<path d="M12,948 L15,943 L18,948Z" fill="#4fb4d4"/>

<!-- track headers -->
<rect x="1460" y="80" width="108" height="878" fill="#2f2f2f"/>
<g stroke="#222" stroke-width="1">
<rect x="1462.5" y="80.5" width="101" height="16" fill="#fff"/>
<rect x="1462.5" y="97.5" width="101" height="17" fill="#fdf05f"/>
<rect x="1462.5" y="115.5" width="101" height="376" fill="#d46f62"/>
<rect x="1466.5" y="150.5" width="97" height="16" fill="#d46f62"/>
<rect x="1466.5" y="167.5" width="97" height="17" fill="#ef9aa7"/>
<rect x="1466.5" y="185.5" width="97" height="237" fill="#ef9aa7"/>
<rect x="1470.5" y="219.5" width="93" height="67" fill="#ef9aa7"/>
<rect x="1470.5" y="287.5" width="93" height="49" fill="#ef9aa7"/>
<rect x="1470.5" y="337.5" width="93" height="50" fill="#ef9aa7"/>
<rect x="1470.5" y="388.5" width="93" height="16" fill="#ef9aa7"/>
<rect x="1470.5" y="405.5" width="93" height="17" fill="#ef9aa7"/>
<rect x="1466.5" y="423.5" width="97" height="68" fill="#ef9aa7"/>
<rect x="1470.5" y="457.5" width="93" height="34" fill="#ef9aa7"/>
<rect x="1462.5" y="492.5" width="101" height="263" fill="#fff"/>
<rect x="1466.5" y="527.5" width="97" height="17" fill="#fff"/>
<rect x="1466.5" y="545.5" width="97" height="210" fill="#e5752f"/>
<rect x="1470.5" y="580.5" width="93" height="16" fill="#e5752f"/>
<rect x="1470.5" y="597.5" width="93" height="17" fill="#e5752f"/>
<rect x="1470.5" y="615.5" width="93" height="17" fill="#e5752f"/>
<rect x="1470.5" y="633.5" width="93" height="16" fill="#e5752f"/>
<rect x="1470.5" y="650.5" width="93" height="17" fill="#e5752f"/>
<rect x="1470.5" y="668.5" width="93" height="17" fill="#e5752f"/>
<rect x="1470.5" y="686.5" width="93" height="17" fill="#e5752f"/>
<rect x="1470.5" y="704.5" width="93" height="34" fill="#e5752f"/>
<rect x="1470.5" y="739.5" width="93" height="16" fill="#e5752f"/>
<rect x="1462.5" y="756.5" width="101" height="157" fill="#7cf8ae"/>
<rect x="1466.5" y="791.5" width="97" height="16" fill="#7cf8ae"/>
<rect x="1466.5" y="808.5" width="97" height="34" fill="#7cf8ae"/>
<rect x="1466.5" y="843.5" width="97" height="17" fill="#7cf8ae"/>
<rect x="1466.5" y="861.5" width="97" height="17" fill="#7cf8ae"/>
<rect x="1466.5" y="879.5" width="97" height="34" fill="#7cf8ae"/>
</g>
<use href="#ic-play" x="1471" y="88.5"/><text class="hd" x="1480" y="92">1 Instrument Rac</text>
<use href="#ic-lines" x="1471" y="106"/><text class="hd" x="1480" y="109.5">Vocal</text>
<use href="#ic-grp" x="1471" y="124"/><text class="hd" x="1480" y="127.5">6 Group</text>
<use href="#ic-lines" x="1475" y="159"/><text class="hd" x="1484" y="162.5">Lead</text>
<use href="#ic-lines" x="1475" y="176"/><text class="hd" x="1484" y="179.5">Strings</text>
<use href="#ic-grp" x="1475" y="194"/><text class="hd" x="1484" y="197.5">Piano</text>
<use href="#ic-down" x="1479" y="228"/><text class="hd" x="1488" y="231.5">13 Kontakt 8</text>
<use href="#ic-down" x="1479" y="295.5"/><text class="hd" x="1488" y="299">14 Omnisphere</text>
<use href="#ic-down" x="1479" y="346"/><text class="hd" x="1488" y="349.5">15 Omnisphere</text>
<use href="#ic-play" x="1479" y="396.5"/><text class="hd" x="1488" y="400">16 MIDI</text>
<use href="#ic-play" x="1479" y="414"/><text class="hd" x="1488" y="417.5">17 MIDI</text>
<use href="#ic-grp" x="1475" y="432"/><text class="hd" x="1484" y="435.5">Pads</text>
<use href="#ic-down" x="1479" y="466.5"/><text class="hd" x="1488" y="470">19 Omnisphere</text>
<use href="#ic-grp" x="1471" y="501"/><text class="hd" x="1480" y="504.5">Kick Bass Drums</text>
<use href="#ic-lines" x="1475" y="536"/><text class="hd" x="1484" y="539.5">!Low End</text>
<use href="#ic-grp" x="1475" y="554"/><text class="hd" x="1484" y="557.5">!Drums</text>
<use href="#ic-lines" x="1479" y="588.5"/><text class="hd" x="1488" y="592">!Perc</text>
<use href="#ic-play" x="1479" y="606"/><text class="hd" x="1488" y="609.5">!Build</text>
<use href="#ic-play" x="1479" y="624"/><text class="hd" x="1488" y="627.5">!Perc</text>
<use href="#ic-play" x="1479" y="641.5"/><text class="hd" x="1488" y="645">!Hat</text>
<use href="#ic-play" x="1479" y="659"/><text class="hd" x="1488" y="662.5">!Top Loop</text>
<use href="#ic-play" x="1479" y="677"/><text class="hd" x="1488" y="680.5">!Hat</text>
<use href="#ic-play" x="1479" y="695"/><text class="hd" x="1488" y="698.5">!Perc</text>
<use href="#ic-down" x="1479" y="713"/><text class="hd" x="1488" y="716.5">38 Audio</text>
<use href="#ic-lines" x="1479" y="747.5"/><text class="hd" x="1488" y="751">!Fill</text>
<use href="#ic-grp" x="1471" y="765"/><text class="hd" x="1480" y="768.5">42 Group</text>
<use href="#ic-play" x="1475" y="800"/><text class="hd" x="1484" y="803.5">43 Audio</text>
<use href="#ic-down" x="1475" y="817"/><text class="hd" x="1484" y="820.5">Fx</text>
<use href="#ic-lines" x="1475" y="852"/><text class="hd" x="1484" y="855.5">Transition</text>
<use href="#ic-play" x="1475" y="870"/><text class="hd" x="1484" y="873.5">Riser</text>
<use href="#ic-down" x="1475" y="888"/><text class="hd" x="1484" y="891.5">Downfilter</text>
<!-- main -->
<rect x="1462" y="916" width="102" height="3" fill="#333"/>
<rect x="1462" y="921" width="102" height="18" fill="#3a3a3a"/>
<ellipse cx="1471" cy="930.5" rx="5.2" ry="4.6" fill="none" stroke="#bbb" stroke-width="0.9"/><path d="M1469.4,927.9 L1473.4,930.5 L1469.4,933.1Z" fill="#bbb"/>
<text x="1482" y="934" style="font-size:9.3px;font-weight:bold;fill:#ddd">Main</text>
<!-- bottom buttons -->
<rect x="1463" y="944" width="13" height="12" fill="#f0a35a"/><path d="M1466,947V953M1468,946V954M1470,945.5V954.5M1472,947V953M1474,948V952" stroke="#222" stroke-width="0.6"/>
<rect x="1479" y="944" width="30" height="12" fill="#1e1e1e"/><rect x="1480" y="945" width="8" height="10" fill="#2f7189"/>
<text x="1481" y="954" style="font-size:9.5px;fill:#bbb">1.00x</text>
<rect x="1531" y="944" width="14" height="12" fill="#1e1e1e"/><text x="1535" y="954" style="font-size:9.5px;fill:#ccc">H</text>
<rect x="1547" y="944" width="14" height="12" fill="#1e1e1e"/><text x="1549" y="954" style="font-size:9.5px;fill:#ccc">W</text>
</svg>
</body></html>
